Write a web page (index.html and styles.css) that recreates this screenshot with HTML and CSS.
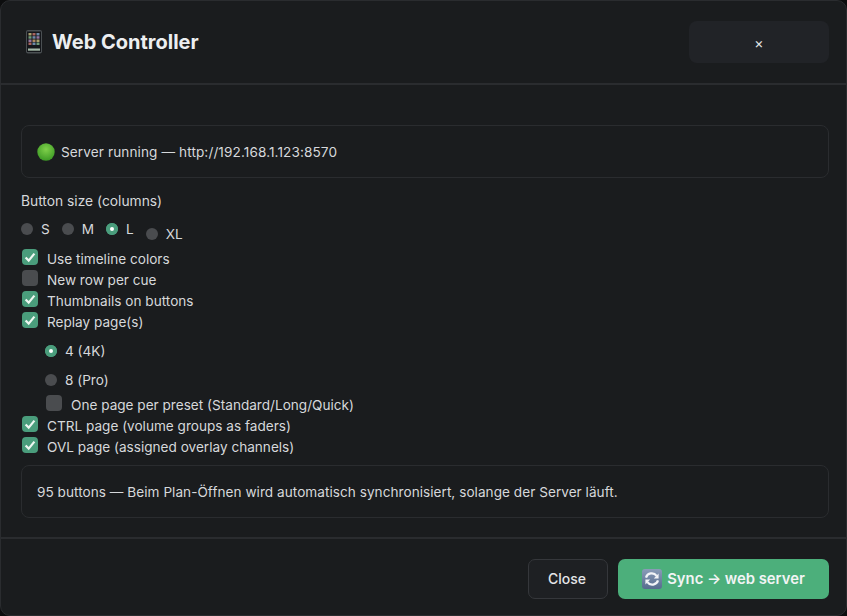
FILE: index.html
```html
<!DOCTYPE html>
<html lang="en">

<head>
  <meta charset="UTF-8">
  <title>Web Controller</title>
  <link rel="stylesheet" href="styles.css">
</head>

<body>
  <div class="modal">
    <header class="modal__header">
      <h1 class="modal__title">
        <svg class="modal__phone" width="20" height="24" viewBox="0 0 20 24" aria-hidden="true">
          <rect x="2" y="0" width="16" height="23.5" rx="2" fill="#4a4f52"/>
          <rect x="3" y="1.5" width="14" height="20.5" fill="#14161a"/>
          <g fill="#a9a06e"><rect x="4.5" y="3" width="3" height="2.5"/><rect x="12.5" y="9.5" width="3" height="2.5"/></g>
          <g fill="#a8645f"><rect x="8.5" y="3" width="3" height="2.5"/><rect x="4.5" y="12.5" width="3" height="2.5"/></g>
          <g fill="#6f8aa8"><rect x="12.5" y="3" width="3" height="2.5"/><rect x="8.5" y="6.2" width="3" height="2.5"/><rect x="8.5" y="12.5" width="3" height="2.5"/></g>
          <g fill="#6f9a78"><rect x="4.5" y="6.2" width="3" height="2.5"/><rect x="12.5" y="12.5" width="3" height="2.5"/></g>
          <g fill="#94749f"><rect x="12.5" y="6.2" width="3" height="2.5"/><rect x="4.5" y="9.5" width="3" height="2.5"/></g>
          <rect x="8.5" y="9.5" width="3" height="2.5" fill="#b08a60"/>
          <rect x="4" y="18.5" width="12" height="2.2" fill="#a3b8a6"/>
        </svg>
        <span>Web Controller</span>
      </h1>
      <button class="modal__x">×</button>
    </header>

    <main class="modal__body">
      <div class="notice notice--status">
        <svg class="notice__dot" width="18" height="18" viewBox="0 0 18 18" aria-hidden="true">
          <defs>
            <radialGradient id="dot" cx="50%" cy="35%" r="65%">
              <stop offset="0" stop-color="#7fd04a"/>
              <stop offset="1" stop-color="#3d9a25"/>
            </radialGradient>
          </defs>
          <circle cx="9" cy="9" r="8.7" fill="url(#dot)"/>
        </svg>
        <span>Server running — http://192.168.1.123:8570</span>
      </div>

      <div class="field-label">Button size (columns)</div>

      <div class="sizes">
        <label class="radio"><span class="radio__mark"></span>S</label>
        <label class="radio"><span class="radio__mark"></span>M</label>
        <label class="radio"><span class="radio__mark radio__mark--on"></span>L</label>
        <label class="radio radio--low"><span class="radio__mark"></span>XL</label>
      </div>

      <div class="checks">
        <label class="check"><span class="check__mark check__mark--on"><svg width="16" height="16" viewBox="0 0 16 16"><path d="M3.6 8.4 6.7 11.6 12.4 4.6" fill="none" stroke="#eef7f2" stroke-width="2.2"/></svg></span>Use timeline colors</label>
        <label class="check"><span class="check__mark"></span>New row per cue</label>
        <label class="check"><span class="check__mark check__mark--on"><svg width="16" height="16" viewBox="0 0 16 16"><path d="M3.6 8.4 6.7 11.6 12.4 4.6" fill="none" stroke="#eef7f2" stroke-width="2.2"/></svg></span>Thumbnails on buttons</label>
        <label class="check"><span class="check__mark check__mark--on"><svg width="16" height="16" viewBox="0 0 16 16"><path d="M3.6 8.4 6.7 11.6 12.4 4.6" fill="none" stroke="#eef7f2" stroke-width="2.2"/></svg></span>Replay page(s)</label>
      </div>

      <div class="replay">
        <label class="radio radio--page"><span class="radio__mark radio__mark--on"></span>4 (4K)</label>
        <label class="radio radio--page"><span class="radio__mark"></span>8 (Pro)</label>
        <label class="check check--sub"><span class="check__mark"></span>One page per preset (Standard/Long/Quick)</label>
      </div>

      <div class="checks">
        <label class="check"><span class="check__mark check__mark--on"><svg width="16" height="16" viewBox="0 0 16 16"><path d="M3.6 8.4 6.7 11.6 12.4 4.6" fill="none" stroke="#eef7f2" stroke-width="2.2"/></svg></span>CTRL page (volume groups as faders)</label>
        <label class="check"><span class="check__mark check__mark--on"><svg width="16" height="16" viewBox="0 0 16 16"><path d="M3.6 8.4 6.7 11.6 12.4 4.6" fill="none" stroke="#eef7f2" stroke-width="2.2"/></svg></span>OVL page (assigned overlay channels)</label>
      </div>

      <div class="notice notice--info">95 buttons — Beim Plan-Öffnen wird automatisch synchronisiert, solange der Server läuft.</div>
    </main>

    <footer class="modal__footer">
      <button class="btn btn--close">Close</button>
      <button class="btn btn--primary">
        <svg width="20" height="20" viewBox="0 0 20 20" aria-hidden="true">
          <defs>
            <linearGradient id="sync" x1="0" y1="0" x2="0" y2="1">
              <stop offset="0" stop-color="#8a9cb8"/>
              <stop offset="1" stop-color="#566c8e"/>
            </linearGradient>
          </defs>
          <rect width="20" height="20" rx="3" fill="url(#sync)"/>
          <path d="M4 8.6A6 6 0 0 1 14.6 6.8M16 11.4A6 6 0 0 1 5.4 13.2" fill="none" stroke="#f2f4f7" stroke-width="2.2"/>
          <path d="M16.6 4.6V9.4H11.8Z M3.4 15.4V10.6H8.2Z" fill="#f2f4f7"/>
        </svg>
        <span>Sync → web server</span>
      </button>
    </footer>
  </div>
</body>

</html>
```

FILE: styles.css
```css
* {
  box-sizing: border-box;
}

html,
body {
  height: 100%;
}

body {
  margin: 0;
  background: #0c0d0e;
  color: #d6d8db;
  font-family: Inter, 'Liberation Sans', sans-serif;
  font-size: 13.6px;
  overflow: hidden;
}

label {
  display: flex;
}

button {
  font-family: inherit;
  cursor: pointer;
}

.modal {
  height: 616px;
  display: flex;
  flex-direction: column;

  background: #1a1c1e;
  border: 1px solid #2a2c2f;
  border-radius: 10px;
}

.modal__header {
  height: 84px;
  padding: 0 17px 0 23px;

  display: flex;
  align-items: center;
  justify-content: space-between;

  border-bottom: 2px solid #2a2c2f;
}

.modal__title {
  margin: 0;

  display: flex;
  align-items: center;
  gap: 8px;

  color: #eceef0;
  font-size: 20px;
  font-weight: 700;
}

.modal__x {
  width: 140px;
  height: 42px;

  border: none;
  border-radius: 8px;
  background: #212327;
  color: #e4e6e8;
  font-size: 14px;
}

.modal__body {
  flex: 1;
  padding: 40px 17px 0 20px;
}

.notice {
  height: 53px;
  padding: 0 15px;

  display: flex;
  align-items: center;
  gap: 6px;

  border: 1px solid #2a2c2f;
  border-radius: 8px;
  background: #1a1c1e;
}

.notice--status {
  letter-spacing: 0.1px;
}

.notice--info {
  margin-top: 8px;
  letter-spacing: 0.035px;
}

.field-label {
  margin-top: 15px;
  line-height: 16px;
  font-size: 13.8px;
}

.sizes {
  margin-top: 12px;
  height: 27px;

  display: flex;
  align-items: flex-start;
}

.radio {
  align-items: center;
  gap: 8px;
  padding-right: 12px;
  line-height: 16px;
}

.radio--low {
  margin-top: 5px;
}

.radio--page {
  height: 29px;
  padding: 0 0 0 24px;
}

.radio__mark {
  width: 12px;
  height: 12px;
  border-radius: 50%;
  background: #4a4c4f;
}

.radio__mark--on {
  background: #4a9d7c;
  box-shadow: inset 0 0 0 4px #4a9d7c;
  position: relative;
}

.radio__mark--on::after {
  content: '';
  position: absolute;
  top: 4px;
  left: 4px;
  width: 4px;
  height: 4px;
  border-radius: 50%;
  background: #fff;
}

.checks {
  display: flex;
  flex-direction: column;
}

.check {
  height: 21px;
  padding-left: 1px;
  align-items: center;
  gap: 9px;
}

.check--sub {
  margin-left: 24px;
}

.check__mark {
  width: 16px;
  height: 16px;
  margin-top: -4px;
  border-radius: 4px;
  background: #4a4c4f;
}

.check__mark--on {
  background: #4a9d7c;
}

.check__mark svg {
  display: block;
}

.replay {
  padding-top: 4px;
}

.modal__footer {
  height: 78px;
  padding: 20px 17px 0 0;

  display: flex;
  justify-content: flex-end;
  align-items: flex-start;
  gap: 10px;

  border-top: 2px solid #2a2c2f;
}

.btn {
  height: 40px;

  display: flex;
  align-items: center;
  justify-content: center;
  gap: 5px;

  border: 1px solid #35373b;
  border-radius: 7px;
  background: #1e2023;
  color: #e4e6e8;
  font-size: 14px;
  font-weight: 500;
}

.btn--close {
  width: 80px;
  padding: 0 2px 1px 0;
}

.btn--primary {
  width: 211px;
  border: none;
  background: #4caf7b;
  color: #f2f4f5;
  font-size: 14.8px;
  font-weight: 600;
}
```
